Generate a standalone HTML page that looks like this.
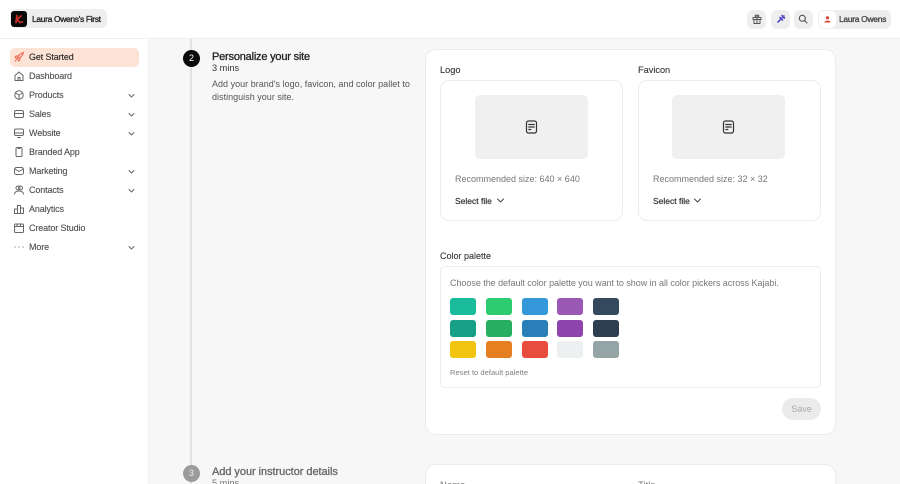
<!DOCTYPE html>
<html><head><meta charset="utf-8"><style>
html,body{margin:0;padding:0;width:900px;height:484px;overflow:hidden;background:#f7f7f7;font-family:"Liberation Sans",sans-serif;color:#333}
#w{position:absolute;left:0;top:0;width:900px;height:484px;overflow:hidden;background:#f7f7f7}
.a{position:absolute;white-space:nowrap}
.box{position:absolute;box-sizing:border-box;background:#fff;border:1px solid #ececec}
.nav{position:absolute;left:29px;font-size:9px;line-height:12px;color:#4c4c4c;white-space:nowrap;letter-spacing:-.13px;-webkit-text-stroke:.1px currentColor}
svg{position:absolute;fill:none;stroke-linecap:round;stroke-linejoin:round}
.ic{left:14px;width:10px;height:10px;stroke:#666;stroke-width:1}
.ch{left:127px;width:9px;height:9px;stroke:#666;stroke-width:1}
.sw{position:absolute;width:26px;height:17px;border-radius:3px}
.tb{position:absolute;top:10px;width:19px;height:19px;border-radius:6px;background:#eee}
</style></head><body><div id="w">
<div class="a" style="left:0;top:0;width:900px;height:38px;background:#fff;border-bottom:1px solid #f0f0f0"></div>
<div class="a" style="left:0;top:39px;width:148px;height:445px;background:#fff;border-right:1px solid #f0f0f0"></div>

<div class="a" style="left:10px;top:9px;width:97px;height:19px;background:#eeeeee;border-radius:6px"></div>
<div class="a" style="left:11px;top:11px;width:16px;height:16px;background:#0a0a0a;border-radius:3px"></div>
<svg style="left:11px;top:11px;width:16px;height:16px;stroke:#c9302a;stroke-width:1.800"><path d="M6 4.500L5 11.500M10 5L6 8.500L9 11.500M10.500 11h1"/></svg>
<div class="a" style="left:32px;top:13px;font-size:8.500px;line-height:12px;color:#222;letter-spacing:-.35px;-webkit-text-stroke:.3px #222">Laura Owens's First</div>

<div class="tb" style="left:747px"></div>
<svg style="left:752px;top:14px;width:10px;height:10px;stroke:#555;stroke-width:1"><path d="M1 3.500h8v2H1zM2 5.500v4h6v-4M5 3.500v6M5 3.500C3 3.500 2.500 1 4 1C5 1 5 3.500 5 3.500C5 3.500 5 1 6 1C7.500 1 7 3.500 5 3.500"/></svg>
<div class="tb" style="left:771px"></div>
<svg style="left:776px;top:14px;width:10px;height:10px;stroke:#5b4fc4;stroke-width:1.600"><path d="M2 8L8 2M4 3.500L6.500 6M6 1.500L8.500 4"/></svg>
<div class="tb" style="left:794px"></div>
<svg style="left:798px;top:14px;width:10px;height:10px;stroke:#444;stroke-width:1"><circle cx="4.300" cy="4.300" r="3"/><path d="M6.500 6.500L9 9"/></svg>
<div class="a" style="left:818px;top:10px;width:73px;height:19px;background:#eeeeee;border-radius:6px"></div>
<div class="a" style="left:819px;top:11px;width:17px;height:17px;background:#fff;border-radius:5px"></div>
<svg style="left:823px;top:15px;width:9px;height:9px;fill:#d9402f"><circle cx="4.500" cy="2.800" r="1.600"/><path d="M1.500 7.500C1.500 5 7.500 5 7.500 7.500z"/></svg>
<div class="a" style="left:839px;top:13px;font-size:8.500px;line-height:12px;color:#444;letter-spacing:-.32px;-webkit-text-stroke:.3px #444">Laura Owens</div>

<div class="a" style="left:10px;top:48px;width:129px;height:19px;background:#fde3d5;border-radius:5px"></div>
<svg class="ic" style="top:52px;stroke:#e8604c"><path d="M3.500 6.500C4 4 6 1.500 9.500.5C8.500 4 6 6 3.500 6.500zM4 4H2L1 5.500L3 6M6 6.500V8L4.500 9L4 7M2.500 7.500L1 9"/></svg>
<div class="nav" style="top:51px;color:#222">Get Started</div>

<svg class="ic" style="top:71px"><path d="M1 4.500L5 1L9 4.500V9.500H1zM4 9.500V6.500H6V9.500"/></svg>
<div class="nav" style="top:70px">Dashboard</div>
<svg class="ic" style="top:90px"><circle cx="5" cy="5" r="4.200"/><path d="M1.500 3L5 5L8.500 3M5 5V9"/></svg>
<div class="nav" style="top:89px">Products</div>
<svg class="ch" style="top:91px"><path d="M2 3.500L4.500 6L7 3.500"/></svg>
<svg class="ic" style="top:109px"><rect x=".5" y="1.500" width="9" height="7" rx="1.500"/><path d="M.5 4.500h9"/></svg>
<div class="nav" style="top:108px">Sales</div>
<svg class="ch" style="top:110px"><path d="M2 3.500L4.500 6L7 3.500"/></svg>
<svg class="ic" style="top:128px"><rect x=".5" y="1" width="9" height="6.500" rx="1.500"/><path d="M.5 5h9M3.500 9.500h3"/></svg>
<div class="nav" style="top:127px">Website</div>
<svg class="ch" style="top:129px"><path d="M2 3.500L4.500 6L7 3.500"/></svg>
<svg class="ic" style="top:147px"><rect x="2" y=".5" width="6" height="9" rx="1"/><path d="M4 1.500h2"/></svg>
<div class="nav" style="top:146px">Branded App</div>
<svg class="ic" style="top:166px"><rect x=".5" y="1.500" width="9" height="7" rx="2"/><path d="M1 3L5 5.500L9 3"/></svg>
<div class="nav" style="top:165px">Marketing</div>
<svg class="ch" style="top:167px"><path d="M2 3.500L4.500 6L7 3.500"/></svg>
<svg class="ic" style="top:185px"><circle cx="4" cy="3" r="2"/><circle cx="6.500" cy="3" r="2"/><path d="M.5 9C1 6.500 3 6 5 6S9 6.500 9.500 9"/></svg>
<div class="nav" style="top:184px">Contacts</div>
<svg class="ch" style="top:186px"><path d="M2 3.500L4.500 6L7 3.500"/></svg>
<svg class="ic" style="top:204px"><path d="M.5 9.500V5H3.500V9.500M3.500 9.500V1.500H6.500V9.500M6.500 9.500V4H9.500V9.500M.5 9.500H9.500"/></svg>
<div class="nav" style="top:203px">Analytics</div>
<svg class="ic" style="top:223px"><rect x=".5" y="1" width="9" height="8.500" rx="1"/><path d="M.5 3.500h9M3 1v2.500M6.500 1v2.500"/></svg>
<div class="nav" style="top:222px">Creator Studio</div>
<svg class="ic" style="top:242px;stroke-width:1.100"><path d="M1 5h.2M5 5h.2M9 5h.2"/></svg>
<div class="nav" style="top:241px">More</div>
<svg class="ch" style="top:243px"><path d="M2 3.500L4.500 6L7 3.500"/></svg>

<div class="a" style="left:190px;top:39px;width:2px;height:445px;background:#e2e2e2"></div>
<div class="a" style="left:183px;top:50px;width:17px;height:17px;border-radius:50%;background:#0a0a0a;color:#fff;font-size:9px;line-height:17px;text-align:center">2</div>
<div class="a" style="left:212px;top:50px;font-size:11px;line-height:14px;color:#222;letter-spacing:-.2px;-webkit-text-stroke:.3px #222">Personalize your site</div>
<div class="a" style="left:212px;top:62px;font-size:9.200px;line-height:12px;color:#333">3 mins</div>
<div class="a" style="left:212px;top:78px;font-size:9px;line-height:12.500px;color:#555;letter-spacing:.02px">Add your brand's logo, favicon, and color pallet to<br>distinguish your site.</div>

<div class="a" style="left:183px;top:465px;width:17px;height:17px;border-radius:50%;background:#9b9b9b;color:#eee;font-size:9px;line-height:17px;text-align:center">3</div>
<div class="a" style="left:212px;top:465px;font-size:11px;line-height:14px;color:#666;letter-spacing:-.05px;-webkit-text-stroke:.3px #666">Add your instructor details</div>
<div class="a" style="left:212px;top:477px;font-size:9.200px;line-height:12px;color:#777">5 mins</div>

<div class="box" style="left:425px;top:49px;width:411px;height:386px;border-radius:11px"></div>
<div class="box" style="left:425px;top:464px;width:411px;height:40px;border-radius:11px"></div>
<div class="a" style="left:440px;top:480px;font-size:9.500px;line-height:12px;color:#777">Name</div>
<div class="a" style="left:638px;top:480px;font-size:9.500px;line-height:12px;color:#777">Title</div>

<div class="a" style="left:440px;top:64px;font-size:9.200px;line-height:12px;color:#333;-webkit-text-stroke:.1px #333">Logo</div>
<div class="a" style="left:638px;top:64px;font-size:9.200px;line-height:12px;color:#333;-webkit-text-stroke:.1px #333">Favicon</div>

<div class="box" style="left:440px;top:80px;width:183px;height:141px;border-radius:9px"></div>
<div class="a" style="left:475px;top:95px;width:113px;height:64px;background:#f0f0f0;border-radius:5px"></div>
<svg style="left:525px;top:120px;width:13px;height:14px;stroke:#333;stroke-width:1.200"><rect x="1.500" y="1" width="10" height="12" rx="2"/><path d="M3.800 4.500h5.400M3.800 7h5.400M3.800 9.500h2"/></svg>
<div class="a" style="left:455px;top:173px;font-size:9px;line-height:12px;color:#777">Recommended size: 640 × 640</div>
<div class="a" style="left:455px;top:195px;font-size:8.500px;line-height:12px;color:#333;-webkit-text-stroke:.2px #333">Select file</div>
<svg style="left:496px;top:196px;width:9px;height:9px;stroke:#444;stroke-width:1"><path d="M1.500 3L4.500 6L7.500 3"/></svg>

<div class="box" style="left:638px;top:80px;width:183px;height:141px;border-radius:9px"></div>
<div class="a" style="left:672px;top:95px;width:113px;height:64px;background:#f0f0f0;border-radius:5px"></div>
<svg style="left:722px;top:120px;width:13px;height:14px;stroke:#333;stroke-width:1.200"><rect x="1.500" y="1" width="10" height="12" rx="2"/><path d="M3.800 4.500h5.400M3.800 7h5.400M3.800 9.500h2"/></svg>
<div class="a" style="left:653px;top:173px;font-size:9px;line-height:12px;color:#777">Recommended size: 32 × 32</div>
<div class="a" style="left:653px;top:195px;font-size:8.500px;line-height:12px;color:#333;-webkit-text-stroke:.2px #333">Select file</div>
<svg style="left:693px;top:196px;width:9px;height:9px;stroke:#444;stroke-width:1"><path d="M1.500 3L4.500 6L7.500 3"/></svg>

<div class="a" style="left:440px;top:250px;font-size:9px;line-height:12px;color:#333;-webkit-text-stroke:.1px #333">Color palette</div>
<div class="box" style="left:440px;top:266px;width:381px;height:122px;border-radius:5px"></div>
<div class="a" style="left:450px;top:277px;font-size:9px;line-height:12px;color:#777;letter-spacing:-.04px">Choose the default color palette you want to show in all color pickers across Kajabi.</div>

<div class="sw" style="left:450px;top:298px;background:#1abc9c"></div>
<div class="sw" style="left:486px;top:298px;background:#2ecc71"></div>
<div class="sw" style="left:522px;top:298px;background:#3498db"></div>
<div class="sw" style="left:557px;top:298px;background:#9b59b6"></div>
<div class="sw" style="left:593px;top:298px;background:#34495e"></div>
<div class="sw" style="left:450px;top:320px;background:#16a085"></div>
<div class="sw" style="left:486px;top:320px;background:#27ae60"></div>
<div class="sw" style="left:522px;top:320px;background:#2980b9"></div>
<div class="sw" style="left:557px;top:320px;background:#8e44ad"></div>
<div class="sw" style="left:593px;top:320px;background:#2c3e50"></div>
<div class="sw" style="left:450px;top:341px;background:#f1c40f"></div>
<div class="sw" style="left:486px;top:341px;background:#e67e22"></div>
<div class="sw" style="left:522px;top:341px;background:#e74c3c"></div>
<div class="sw" style="left:557px;top:341px;background:#ecf0f1"></div>
<div class="sw" style="left:593px;top:341px;background:#95a5a6"></div>
<div class="a" style="left:450px;top:367px;font-size:7.600px;line-height:11px;color:#808080">Reset to default palette</div>

<div class="a" style="left:782px;top:398px;width:39px;height:22px;border-radius:11px;background:#ebebeb;color:#aaa;font-size:9px;line-height:22px;text-align:center">Save</div>
</div></body></html>
